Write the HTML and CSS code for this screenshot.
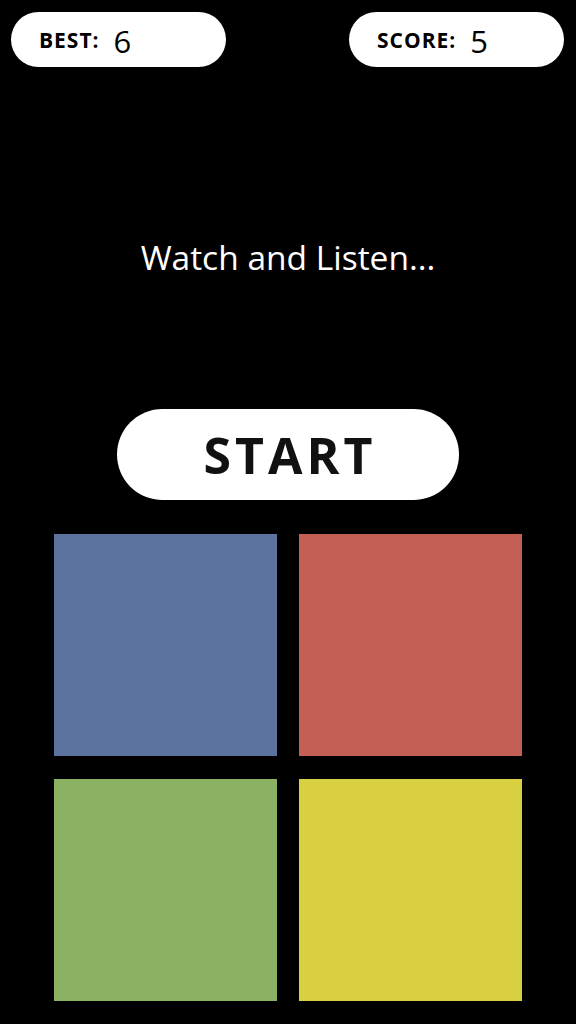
FILE: index.html
```html
<!DOCTYPE html>
<html>
<head>
<meta charset="utf-8">
<link rel="stylesheet" href="styles.css">
</head>
<body>
<div class="app">
  <header class="scores">
    <div class="pill">
      <span class="label">BEST:</span>
      <span class="num">6</span>
    </div>
    <div class="pill">
      <span class="label">SCORE:</span>
      <span class="num">5</span>
    </div>
  </header>
  <p class="message">Watch and Listen...</p>
  <button class="start">START</button>
  <div class="board">
    <div class="pad blue"></div>
    <div class="pad red"></div>
    <div class="pad green"></div>
    <div class="pad yellow"></div>
  </div>
</div>
</body>
</html>
```
FILE: styles.css
```css
html, body {
  margin: 0;
  padding: 0;
  background: #000;
}
body {
  font-family: "Open Sans", "DejaVu Sans", sans-serif;
  color: #fff;
}
.app {
  width: 576px;
  height: 1024px;
  display: flex;
  flex-direction: column;
  align-items: center;
}
.scores {
  width: 100%;
  box-sizing: border-box;
  padding: 12px 12px 0 11px;
  display: flex;
  justify-content: space-between;
}
.pill {
  width: 215px;
  height: 55px;
  border-radius: 28px;
  background: #fff;
  color: #000;
  display: flex;
  align-items: center;
  box-sizing: border-box;
  padding-left: 28px;
}
.label {
  font-weight: 700;
  font-size: 21px;
  letter-spacing: 1px;
}
.num {
  font-size: 31px;
  margin-left: 14px;
  line-height: 1;
  padding-top: 3px;
}
.message {
  margin: 170px 0 0;
  font-size: 33.5px;
  font-weight: 500;
  line-height: 40px;
  text-align: center;
}
.start {
  margin-top: 132px;
  width: 342px;
  height: 91px;
  border: none;
  border-radius: 46px;
  background: #fff;
  color: #111;
  font-family: "Open Sans", "DejaVu Sans", sans-serif;
  font-weight: 700;
  font-size: 50px;
  letter-spacing: 4px;
  padding: 0 0 0 4px;
}
.board {
  margin-top: 34px;
  display: grid;
  grid-template-columns: 223px 223px;
  grid-template-rows: 222px 222px;
  gap: 23px 22px;
}
.blue { background: #5b739e; }
.red { background: #c45f55; }
.green { background: #8bb262; }
.yellow { background: #d8d040; }
```
